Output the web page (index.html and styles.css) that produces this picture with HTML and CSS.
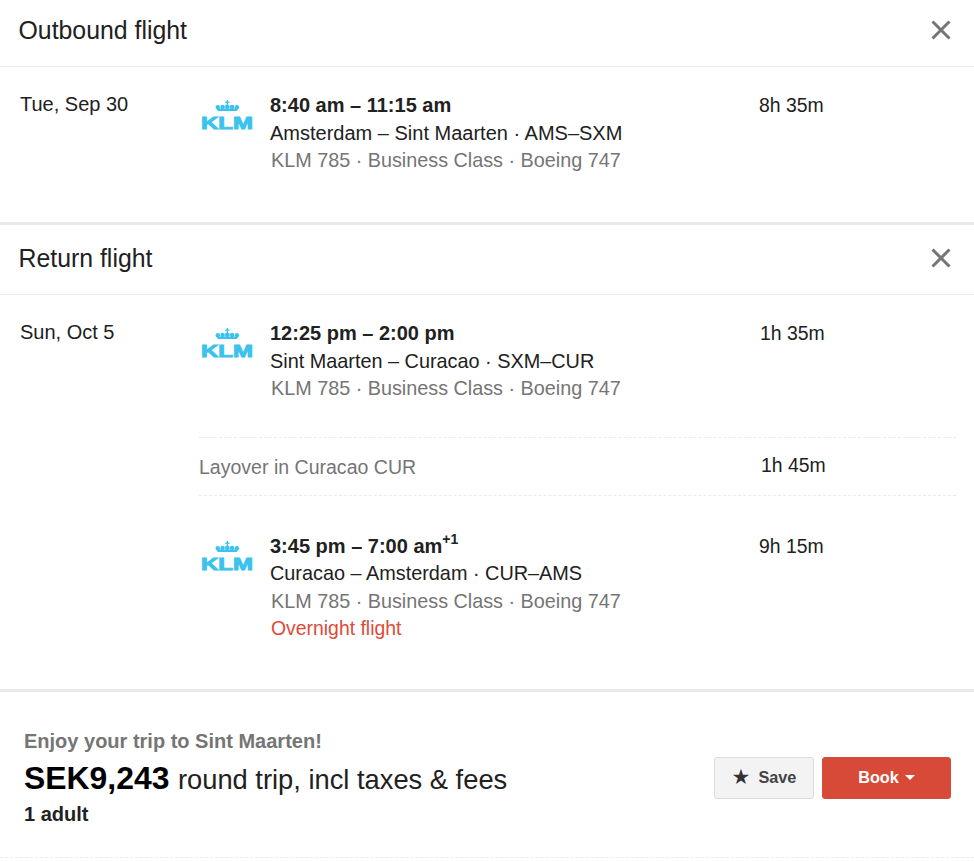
FILE: index.html
```html
<!DOCTYPE html>
<html lang="en">
<head>
<meta charset="utf-8">
<title>Flight details</title>
<link rel="stylesheet" href="styles.css">
</head>
<body>
<svg class="defs" width="0" height="0" aria-hidden="true">
  <symbol id="crown" viewBox="0 0 54 36">
    <g fill="#3bc3ee">
      <rect x="26.7" y="2" width="1.3" height="5"/>
      <rect x="25.2" y="3.6" width="4.3" height="1.3"/>
      <circle cx="17.8" cy="9.2" r="2.2"/>
      <circle cx="22.6" cy="9" r="2.3"/>
      <circle cx="27.35" cy="8.8" r="2.4"/>
      <circle cx="32.1" cy="9" r="2.3"/>
      <circle cx="36.9" cy="9.2" r="2.2"/>
      <path d="M16.5 10.6h21.700l-1.400 2.400H17.900z"/>
    </g>
  </symbol>
  <symbol id="close" viewBox="0 0 20 20">
    <path d="M1.500 1.500l17 17M18.500 1.500l-17 17" stroke="#757575" stroke-width="3" fill="none"/>
  </symbol>
</svg>

<main class="page">
  <section class="leg">
    <header class="leg-head">
      <h2>Outbound flight</h2>
      <svg class="close"><use href="#close"/></svg>
    </header>
    <div class="leg-body leg-body-outbound">
      <div class="date">Tue, Sep 30</div>
      <div class="segments">
        <div class="segment">
          <svg class="logo" viewBox="0 0 54 36"><use href="#crown" width="54" height="36"/><text x="1" y="30.500" textLength="52" lengthAdjust="spacingAndGlyphs" class="klm-text">KLM</text></svg>
          <div class="info">
            <div class="times">8:40 am – 11:15 am</div>
            <div class="route-wide">Amsterdam – Sint Maarten · AMS–SXM</div>
            <div class="muted">KLM 785 · Business Class · Boeing 747</div>
          </div>
          <div class="duration">8h 35m</div>
        </div>
      </div>
    </div>
  </section>

  <section class="leg">
    <header class="leg-head leg-head-return">
      <h2>Return flight</h2>
      <svg class="close"><use href="#close"/></svg>
    </header>
    <div class="leg-body leg-body-return">
      <div class="date">Sun, Oct 5</div>
      <div class="segments">
        <div class="segment">
          <svg class="logo" viewBox="0 0 54 36"><use href="#crown" width="54" height="36"/><text x="1" y="30.500" textLength="52" lengthAdjust="spacingAndGlyphs" class="klm-text">KLM</text></svg>
          <div class="info">
            <div class="times">12:25 pm – 2:00 pm</div>
            <div class="route">Sint Maarten – Curacao · SXM–CUR</div>
            <div class="muted">KLM 785 · Business Class · Boeing 747</div>
          </div>
          <div class="duration duration-alt">1h 35m</div>
        </div>
        <div class="layover">
          <span class="muted layover-label">Layover in Curacao CUR</span>
          <span class="layover-time">1h 45m</span>
        </div>
        <div class="segment">
          <svg class="logo" viewBox="0 0 54 36"><use href="#crown" width="54" height="36"/><text x="1" y="30.500" textLength="52" lengthAdjust="spacingAndGlyphs" class="klm-text">KLM</text></svg>
          <div class="info">
            <div class="times">3:45 pm – 7:00 am<sup>+1</sup></div>
            <div class="route">Curacao – Amsterdam · CUR–AMS</div>
            <div class="muted">KLM 785 · Business Class · Boeing 747</div>
            <div class="warn">Overnight flight</div>
          </div>
          <div class="duration">9h 15m</div>
        </div>
      </div>
    </div>
  </section>

  <footer class="summary">
    <div class="price-block">
      <div class="enjoy">Enjoy your trip to Sint Maarten!</div>
      <div class="price"><strong>SEK9,243</strong> round trip, incl taxes &amp; fees</div>
      <div class="adults">1 adult</div>
    </div>
    <div class="actions">
      <button class="btn btn-save" type="button"><span class="star">★</span>Save</button>
      <button class="btn btn-book" type="button">Book<span class="caret"></span></button>
    </div>
  </footer>
</main>
</body>
</html>
```

FILE: styles.css
```css
* { box-sizing: border-box; }
html, body { margin: 0; padding: 0; background: #fff; }
body {
  font-family: "Liberation Sans", Arial, sans-serif;
  font-size: 20px;
  line-height: 27.5px;
  color: #212121;
}
.defs { position: absolute; }
.klm-text { font-family: "Liberation Sans", Arial, sans-serif; font-weight: 700; font-size: 16px; fill: #3bc3ee; stroke: #3bc3ee; stroke-width: 0.9px; }
.page { width: 974px; height: 861px; overflow: hidden; }
.leg-head {
  height: 67px;
  border-bottom: 1px solid #ebebeb;
  padding: 0 23px 5px 18.5px;
  display: flex;
  align-items: center;
  justify-content: space-between;
}
.leg-head-return {
  height: 73px;
  padding-bottom: 2px;
  border-top: 3px solid #e8e8e8;
}
h2 { margin: 0; font-weight: 400; font-size: 24.85px; color: #212121; }
.close { width: 20px; height: 20px; margin-bottom: 2px; }
.leg-body { display: flex; padding-left: 20px; padding-right: 18px; }
.leg-body-outbound { padding-top: 25px; height: 155px; }
.leg-body-return { padding-top: 25px; height: 394px; }
.date { width: 179px; flex: none; margin-top: -1px; }
.segments { flex: 1; }
.segment { display: flex; }
.logo { width: 54px; height: 36px; flex: none; margin: 6px 0 0 1px; }
.info { width: 489px; flex: none; margin-left: 16px; }
.times { font-weight: 700; }
.times sup { font-size: 14px; line-height: 0; vertical-align: baseline; position: relative; top: -9px; }
.route { font-size: 19.85px; }
.route-wide { font-size: 20px; }
.muted { color: #757575; font-size: 19.8px; margin-left: 1px; }
.warn { color: #dd4b39; font-size: 19.4px; margin-left: 1px; }
.duration { white-space: nowrap; font-size: 19.4px; }
.duration-alt { margin-left: 1px; }
.layover {
  display: flex;
  margin: 34px 0 37px;
  height: 59px;
  border-top: 1px dashed #ebebeb;
  border-bottom: 1px dashed #ebebeb;
  align-items: center;
  padding-top: 4px;
}
.layover-label { width: 562px; font-size: 19.55px; margin-left: 0; flex: none; }
.layover-time { font-size: 19.4px; margin-top: -4px; }
.summary {
  height: 169px;
  border-top: 3px solid #e8e8e8;
  border-bottom: 1px dashed #ebebeb;
  padding: 36px 23px 0 24px;
  display: flex;
  justify-content: space-between;
}
.enjoy { font-weight: 700; color: #757575; }
.price { font-size: 27.3px; line-height: 38px; margin-top: 3px; color: #212121; }
.price strong { font-size: 31.9px; color: #000; margin-right: 1px; }
.adults { font-weight: 700; margin-top: 2px; }
.actions { display: flex; gap: 8px; margin-top: 29px; }
.btn {
  height: 42px;
  border-radius: 3px;
  font-family: inherit;
  font-size: 16.3px;
  font-weight: 700;
  display: flex;
  align-items: center;
  justify-content: center;
  padding: 0 0 2px;
}
.btn-save { width: 100px; background: #f3f3f3; border: 1px solid #dcdcdc; color: #444; }
.star { font-family: "DejaVu Sans", sans-serif; font-size: 21px; font-weight: 400; margin-right: 8px; color: #333; }
.btn-book { width: 129px; background: #d84a38; border: 1px solid #d84a38; color: #fff; }
.caret { width: 0; height: 0; margin-left: 6px; border-left: 5px solid transparent; border-right: 5px solid transparent; border-top: 5px solid #fff; }
```
